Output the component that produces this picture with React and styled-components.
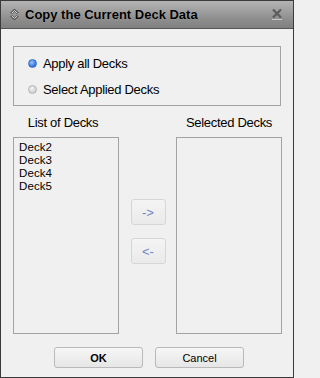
import React from "react";
import styled, { createGlobalStyle } from "styled-components";

const Global = createGlobalStyle`
  html, body { margin: 0; padding: 0; background: #f0f0f0; }
  * { box-sizing: border-box; }
`;

const Window = styled.div`
  width: 294px;
  height: 378px;
  border: 1px solid #3a3a3a;
  background: #f0f0f0;
  display: flex;
  flex-direction: column;
  font-family: "Liberation Sans", Arial, sans-serif;
  color: #000;
`;

const TitleBar = styled.div`
  height: 28px;
  flex: none;
  display: flex;
  align-items: center;
  padding: 0 0 0 9px;
  background: linear-gradient(#b4b4b4, #8c8c8c 70%, #808080);
  border-bottom: 1px solid #555;
`;

const TitleText = styled.div`
  font-size: 13px;
  font-weight: bold;
  margin-left: 6px;
  text-shadow: 0 0 1px rgba(255, 255, 240, 0.35);
  flex: 1;
`;

const CloseBtn = styled.div`
  width: 14px;
  height: 14px;
  margin-right: 9px;
  display: flex;
  align-items: center;
  justify-content: center;
`;

const Body = styled.div`
  flex: 1;
  display: flex;
  flex-direction: column;
  padding: 17px 0 0 12px;
`;

const Group = styled.div`
  width: 268px;
  height: 60px;
  border: 1px solid #a3a3a3;
  display: flex;
  flex-direction: column;
  padding: 9px 0 0 14px;
  gap: 12px;
`;

const RadioRow = styled.div`
  display: flex;
  align-items: center;
  height: 14px;
  font-size: 13px;
  letter-spacing: -0.3px;
  gap: 6px;
`;

const RadioDot = styled.span`
  width: 9px;
  height: 9px;
  border-radius: 50%;
  flex: none;
  border: 1px solid ${(p) => (p.$checked ? "#3a6fc4" : "#b4b4b4")};
  background: ${(p) =>
    p.$checked
      ? "radial-gradient(circle at 40% 35%, #9cc6ff, #3a7be0 60%, #2b5fb8)"
      : "radial-gradient(circle at 40% 35%, #f4f4f4, #cfcfcf 70%, #bdbdbd)"};
`;

const Lists = styled.div`
  display: grid;
  grid-template-columns: 106px 57px 106px;
  margin-top: 10px;
`;

const Column = styled.div`
  display: flex;
  flex-direction: column;
`;

const ListLabel = styled.div`
  height: 14px;
  line-height: 14px;
  font-size: 13px;
  letter-spacing: -0.3px;
  text-align: center;
  margin-bottom: 7px;
  padding-right: ${(p) => p.$shift || 0}px;
`;

const ListBox = styled.div`
  height: 197px;
  border: 1px solid #a3a3a3;
  padding: 3px 0 0 5px;
`;

const ListItem = styled.div`
  height: 13px;
  font-size: 11.5px;
  line-height: 13px;
  letter-spacing: 0.1px;
`;

const Middle = styled.div`
  display: flex;
  flex-direction: column;
  align-items: center;
  padding-top: 83px;
  padding-left: 1px;
  gap: 13px;
`;

const ArrowButton = styled.div`
  width: 35px;
  height: 26px;
  border: 1px solid #d6d6d6;
  border-radius: 3px;
  background: linear-gradient(#f4f4f4, #eaeaea);
  color: #6f86c6;
  font-size: 13px;
  display: flex;
  align-items: center;
  justify-content: center;
  padding-top: 1px;
`;

const Footer = styled.div`
  display: flex;
  gap: 12px;
  padding-left: 41px;
  margin-top: 13px;
`;

const DlgButton = styled.div`
  width: 89px;
  height: 21px;
  border: 1px solid #b9b9b9;
  border-radius: 3px;
  background: linear-gradient(#f6f6f6, #e6e6e6);
  font-size: 11px;
  font-weight: ${(p) => (p.$bold ? "bold" : "normal")};
  display: flex;
  align-items: center;
  justify-content: center;
`;

const SortIcon = () => (
  <svg width="9" height="11" viewBox="0 0 9 11">
    <path d="M1 4.5 L4.5 1 L8 4.5" fill="none" stroke="#4a4a4a" strokeWidth="2.2" />
    <path d="M1 6.5 L4.5 10 L8 6.5" fill="none" stroke="#4a4a4a" strokeWidth="2.2" />
    <path d="M1.5 4.3 L4.5 1.4 L7.5 4.3" fill="none" stroke="#e8e8e8" strokeWidth="1" />
    <path d="M1.5 6.7 L4.5 9.6 L7.5 6.7" fill="none" stroke="#e8e8e8" strokeWidth="1" />
  </svg>
);

const CloseIcon = () => (
  <svg width="12" height="13" viewBox="0 0 12 13">
    <path d="M2 1.5 L10 9.5 M10 1.5 L2 9.5" stroke="#5c5c5c" strokeWidth="2.2" />
    <path d="M1 11.5 L11 11.5" stroke="#c8c8c8" strokeWidth="1" />
  </svg>
);

export default function App() {
  const decks = ["Deck2", "Deck3", "Deck4", "Deck5"];
  return (
    <>
      <Global />
      <Window>
        <TitleBar>
          <SortIcon />
          <TitleText>Copy the Current Deck Data</TitleText>
          <CloseBtn>
            <CloseIcon />
          </CloseBtn>
        </TitleBar>
        <Body>
          <Group>
            <RadioRow>
              <RadioDot $checked />
              Apply all Decks
            </RadioRow>
            <RadioRow>
              <RadioDot />
              Select Applied Decks
            </RadioRow>
          </Group>
          <Lists>
            <Column>
              <ListLabel $shift={6}>List of Decks</ListLabel>
              <ListBox>
                {decks.map((d) => (
                  <ListItem key={d}>{d}</ListItem>
                ))}
              </ListBox>
            </Column>
            <Middle>
              <ArrowButton>-&gt;</ArrowButton>
              <ArrowButton>&lt;-</ArrowButton>
            </Middle>
            <Column>
              <ListLabel>Selected Decks</ListLabel>
              <ListBox />
            </Column>
          </Lists>
          <Footer>
            <DlgButton $bold>OK</DlgButton>
            <DlgButton>Cancel</DlgButton>
          </Footer>
        </Body>
      </Window>
    </>
  );
}
